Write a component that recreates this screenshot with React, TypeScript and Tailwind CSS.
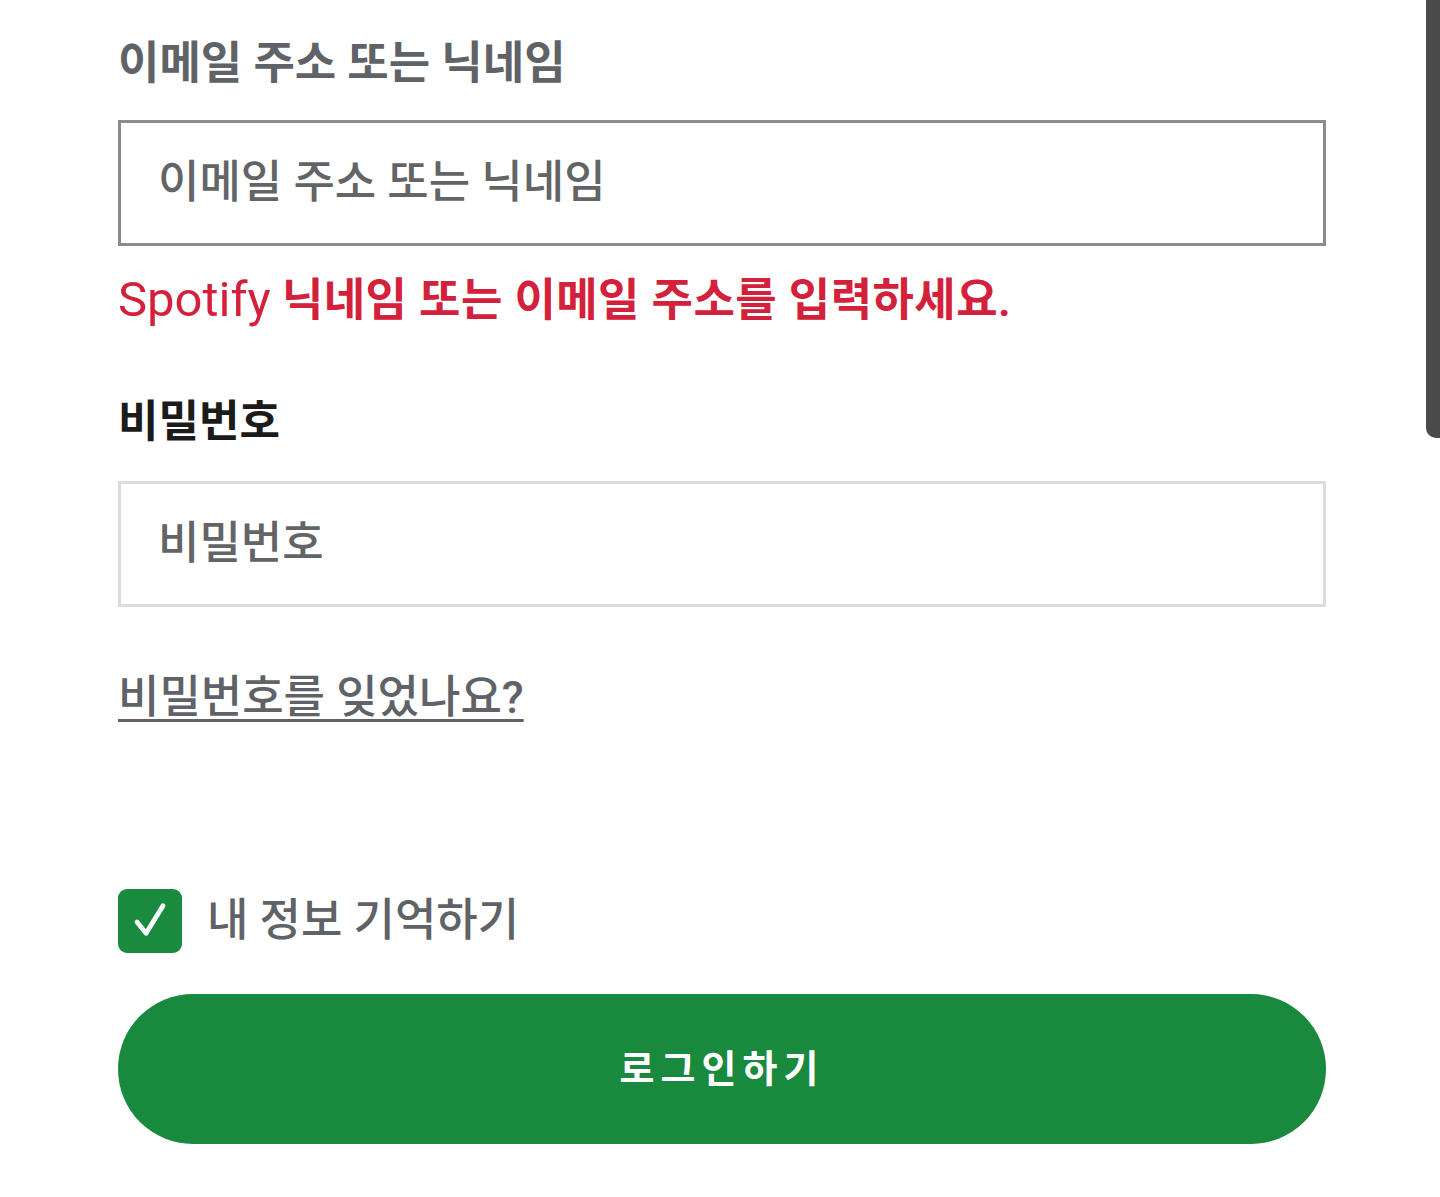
import React from 'react';

const font = { fontFamily: "Roboto, 'Noto Sans CJK KR', sans-serif" };

export default function App() {
  return (
    <div className="relative min-h-[1197px] w-full bg-white" style={font}>
      {/* scrollbar thumb */}
      <div className="absolute right-0 top-0 h-[438px] w-[14px] rounded-bl-[10px] bg-[#4b4b4b]" />

      <div className="ml-[118px] w-[1208px] pt-[36px]">
        {/* Email */}
        <label className="block text-[45px] font-bold leading-[56px] text-[#5f6266]">
          이메일 주소 또는 닉네임
        </label>
        <div className="mt-[28px] flex h-[126px] items-center border-[3px] border-[#8c8c8c] pl-[37px]">
          <span className="text-[45px] font-medium leading-[56px] text-[#626466]">이메일 주소 또는 닉네임</span>
        </div>
        <p className="mt-[26px] text-[45px] leading-[56px] text-[#d4213b]">
          <span className="text-[49px]">Spotify</span>{' '}
          <span className="font-semibold tracking-[0.01em]">닉네임 또는 이메일 주소를 입력하세요.</span>
        </p>

        {/* Password */}
        <label className="mt-[65px] block text-[44px] font-bold leading-[56px] text-[#1b1b1b]">
          비밀번호
        </label>
        <div className="mt-[31px] flex h-[126px] items-center border-[3px] border-[#dcdcdc] pl-[37px]">
          <span className="text-[45px] font-medium leading-[56px] text-[#626466]">비밀번호</span>
        </div>

        <a className="mt-[63px] inline-block text-[45px] font-medium leading-[56px] text-[#5f6266] underline decoration-[3px] underline-offset-[6px]">
          비밀번호를 잊었나요?
        </a>

        {/* Remember */}
        <div className="mt-[163px] flex items-center gap-[25px]">
          <div className="flex h-[64px] w-[64px] items-center justify-center rounded-[9px] bg-[#1a8a3e]">
            <svg viewBox="0 0 24 24" className="h-[52px] w-[52px]" fill="none" stroke="white" strokeWidth="2.2" strokeLinecap="round" strokeLinejoin="round">
              <path d="M6 12.5l4.2 5.2L18 5" />
            </svg>
          </div>
          <span className="text-[45px] font-medium leading-[56px] text-[#5f6266]">내 정보 기억하기</span>
        </div>

        <button className="mt-[41px] flex h-[150px] w-full items-center justify-center rounded-full bg-[#18893d]">
          <span className="text-[38px] font-bold tracking-[0.16em] text-white">로그인하기</span>
        </button>
      </div>
    </div>
  );
}
